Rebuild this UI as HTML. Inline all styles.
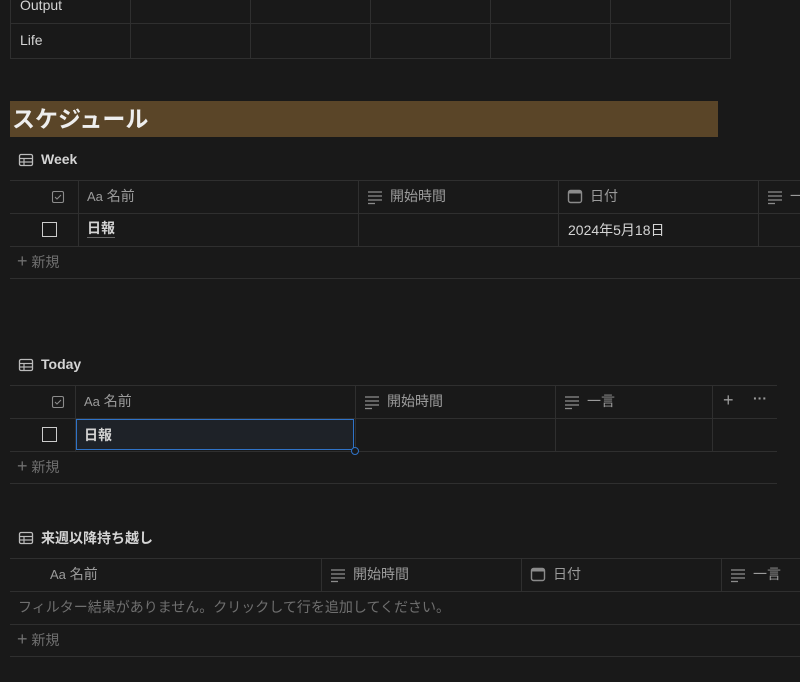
<html><head><style>
body{margin:0;background:#191919;width:800px;height:682px;overflow:hidden;position:relative;font-family:"Liberation Sans","Noto Sans CJK JP",sans-serif;color:#d4d4d4;font-size:14px}
.a{position:absolute;white-space:nowrap}
.h{position:absolute;height:1px;background:#2f2f2f}
.v{position:absolute;width:1px;background:#2f2f2f}
.g{color:#9b9b9b}
.t{position:absolute;font-size:14px;font-weight:bold;color:#d4d4d4;white-space:nowrap}
</style></head><body>
<div class="h" style="left:10px;width:721px;top:23px"></div>
<div class="h" style="left:10px;width:721px;top:58px"></div>
<div class="v" style="left:10px;top:0;height:59px"></div>
<div class="v" style="left:130px;top:0;height:59px"></div>
<div class="v" style="left:250px;top:0;height:59px"></div>
<div class="v" style="left:370px;top:0;height:59px"></div>
<div class="v" style="left:490px;top:0;height:59px"></div>
<div class="v" style="left:610px;top:0;height:59px"></div>
<div class="v" style="left:730px;top:0;height:59px"></div>
<div class="a" style="left:20px;top:-3px">Output</div>
<div class="a" style="left:20px;top:32px">Life</div>
<div class="a" style="left:10px;top:101px;width:708px;height:36px;background:#5a4528"></div>
<div class="a" style="left:12px;top:102px;font-size:23px;font-weight:bold;color:#eee;line-height:34px">スケジュール</div>

<svg width="0" height="0" style="position:absolute"><defs>
<g id="tb"><rect x="1.5" y="2.5" width="13" height="11" rx="1.5" fill="none" stroke="#bbb" stroke-width="1.3"/><line x1="1.5" y1="6.5" x2="14.5" y2="6.5" stroke="#bbb" stroke-width="1.2"/><line x1="1.5" y1="10" x2="14.5" y2="10" stroke="#bbb" stroke-width="1.2"/><line x1="6" y1="6.5" x2="6" y2="13.5" stroke="#bbb" stroke-width="1.2"/></g>
<g id="ln" stroke="#8b8b8b" stroke-width="1.3"><line x1="1" y1="3" x2="15" y2="3"/><line x1="1" y1="7" x2="15" y2="7"/><line x1="1" y1="11" x2="15" y2="11"/><line x1="1" y1="14.5" x2="8" y2="14.5"/></g>
<g id="cal"><rect x="1.5" y="2.5" width="13" height="12" rx="2" fill="none" stroke="#8b8b8b" stroke-width="1.4"/><rect x="1.5" y="2.5" width="13" height="3" fill="#8b8b8b"/></g>
<g id="cb"><rect x="2.5" y="2.5" width="11" height="11" rx="1.5" fill="none" stroke="#8b8b8b" stroke-width="1.1"/><path d="M5 8l2 2 4-4" fill="none" stroke="#8b8b8b" stroke-width="1.1"/></g>
</defs></svg>

<svg class="a" style="left:18px;top:152px" width="16" height="16"><use href="#tb"/></svg>
<div class="t" style="left:41px;top:151px">Week</div>
<div class="h" style="left:10px;width:790px;top:180px"></div>
<div class="h" style="left:10px;width:790px;top:213px"></div>
<div class="h" style="left:10px;width:790px;top:246px"></div>
<div class="h" style="left:10px;width:790px;top:278px"></div>
<div class="v" style="left:78px;top:180px;height:66px"></div>
<div class="v" style="left:358px;top:180px;height:66px"></div>
<div class="v" style="left:558px;top:180px;height:66px"></div>
<div class="v" style="left:758px;top:180px;height:66px"></div>
<svg class="a" style="left:50px;top:189px" width="16" height="16"><use href="#cb"/></svg>
<div class="a g" style="left:87px;top:186px"><span style="font-size:13px">Aa</span> 名前</div>
<svg class="a" style="left:367px;top:189px" width="16" height="16"><use href="#ln"/></svg>
<div class="a g" style="left:390px;top:186px">開始時間</div>
<svg class="a" style="left:567px;top:188px" width="16" height="16"><use href="#cal"/></svg>
<div class="a g" style="left:590px;top:186px">日付</div>
<svg class="a" style="left:767px;top:189px" width="16" height="16"><use href="#ln"/></svg>
<div class="a g" style="left:790px;top:186px">一言</div>
<div class="a" style="left:42px;top:222px;width:13px;height:13px;border:1.5px solid #ccc"></div>
<div class="a" style="left:87px;top:220px;font-weight:bold;border-bottom:1px solid #666;line-height:17px">日報</div>
<div class="a" style="left:568px;top:220px">2024年5月18日</div>
<div class="a" style="left:17px;top:252px;color:#6f6f6f"><span style="font-size:18px;line-height:16px">+</span> 新規</div>

<svg class="a" style="left:18px;top:357px" width="16" height="16"><use href="#tb"/></svg>
<div class="t" style="left:41px;top:356px">Today</div>
<div class="h" style="left:10px;width:767px;top:385px"></div>
<div class="h" style="left:10px;width:767px;top:418px"></div>
<div class="h" style="left:10px;width:767px;top:451px"></div>
<div class="h" style="left:10px;width:767px;top:483px"></div>
<div class="v" style="left:75px;top:385px;height:66px"></div>
<div class="v" style="left:355px;top:385px;height:66px"></div>
<div class="v" style="left:555px;top:385px;height:66px"></div>
<div class="v" style="left:712px;top:385px;height:66px"></div>
<svg class="a" style="left:50px;top:394px" width="16" height="16"><use href="#cb"/></svg>
<div class="a g" style="left:84px;top:391px"><span style="font-size:13px">Aa</span> 名前</div>
<svg class="a" style="left:364px;top:394px" width="16" height="16"><use href="#ln"/></svg>
<div class="a g" style="left:387px;top:391px">開始時間</div>
<svg class="a" style="left:564px;top:394px" width="16" height="16"><use href="#ln"/></svg>
<div class="a g" style="left:587px;top:391px">一言</div>
<div class="a g" style="left:723px;top:390px;font-size:18px">+</div>
<div class="a g" style="left:753px;top:390px;font-weight:bold">···</div>
<div class="a" style="left:42px;top:427px;width:13px;height:13px;border:1.5px solid #ccc"></div>
<div class="a" style="left:76px;top:419px;width:276px;height:29px;border:1.5px solid #2f73c8;background:#1e2228"></div>
<div class="a" style="left:351px;top:447px;width:6px;height:6px;border:1.5px solid #2f73c8;border-radius:50%;background:#191919"></div>
<div class="a" style="left:84px;top:425px;font-weight:bold">日報</div>
<div class="a" style="left:17px;top:457px;color:#6f6f6f"><span style="font-size:18px;line-height:16px">+</span> 新規</div>

<svg class="a" style="left:18px;top:530px" width="16" height="16"><use href="#tb"/></svg>
<div class="t" style="left:41px;top:528px">来週以降持ち越し</div>
<div class="h" style="left:10px;width:790px;top:558px"></div>
<div class="h" style="left:10px;width:790px;top:591px"></div>
<div class="h" style="left:10px;width:790px;top:624px"></div>
<div class="h" style="left:10px;width:790px;top:656px"></div>
<div class="v" style="left:321px;top:558px;height:33px"></div>
<div class="v" style="left:521px;top:558px;height:33px"></div>
<div class="v" style="left:721px;top:558px;height:33px"></div>
<div class="a g" style="left:50px;top:564px"><span style="font-size:13px">Aa</span> 名前</div>
<svg class="a" style="left:330px;top:567px" width="16" height="16"><use href="#ln"/></svg>
<div class="a g" style="left:353px;top:564px">開始時間</div>
<svg class="a" style="left:530px;top:566px" width="16" height="16"><use href="#cal"/></svg>
<div class="a g" style="left:553px;top:564px">日付</div>
<svg class="a" style="left:730px;top:567px" width="16" height="16"><use href="#ln"/></svg>
<div class="a g" style="left:753px;top:564px">一言</div>
<div class="a" style="left:18px;top:597px;color:#6f6f6f">フィルター結果がありません。クリックして行を追加してください。</div>
<div class="a" style="left:17px;top:630px;color:#6f6f6f"><span style="font-size:18px;line-height:16px">+</span> 新規</div>
</body></html>
